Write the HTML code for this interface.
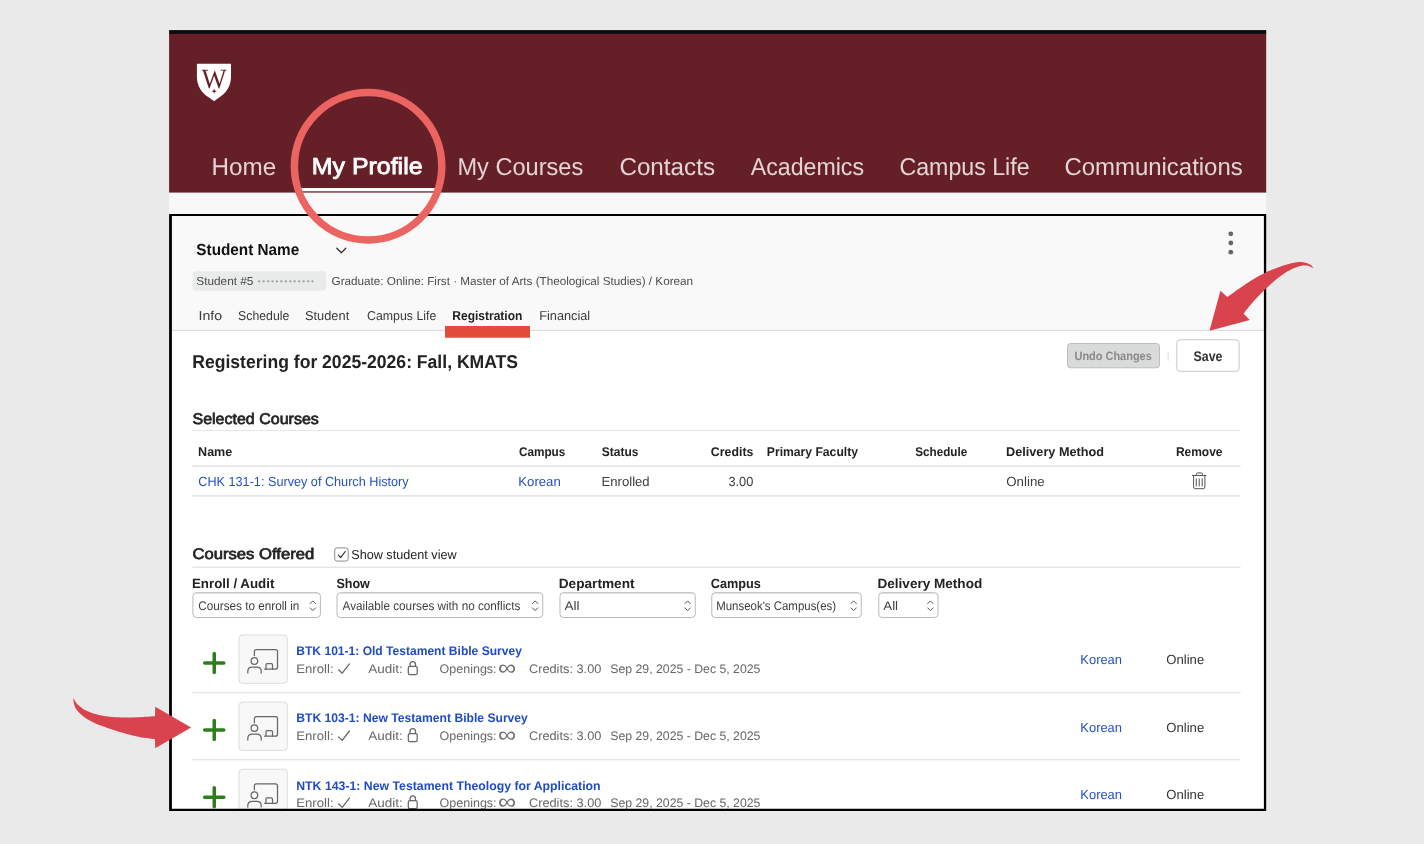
<!DOCTYPE html>
<html lang="en">
<head>
<meta charset="utf-8">
<title>Registration - My Profile</title>
<style>
html,body{margin:0;padding:0}
body{width:1424px;height:844px;position:relative;overflow:hidden;background:#eaeaea;font-family:"Liberation Sans",sans-serif;}
.t{position:absolute;left:0;top:0;white-space:nowrap;line-height:1;transform-origin:0 0;margin:0;padding:0;border:0;background:none;font-family:inherit;font-weight:400;letter-spacing:0;text-decoration:none;display:block;text-rendering:geometricPrecision;will-change:opacity}
#page{position:absolute;left:0;top:0;width:1424px;height:844px;overflow:hidden;will-change:opacity}
.b{position:absolute;box-sizing:border-box;margin:0;padding:0}
svg{position:absolute;left:0;top:0;overflow:visible}
</style>
</head>
<body>
<div id="page">
<svg class="shapes" width="1424" height="844" viewBox="0 0 1424 844" aria-hidden="true"><rect x="169.10" y="30.10" width="1097.10" height="4.10" fill="#0b0b0b"/><rect x="169.10" y="33.80" width="1097.10" height="158.95" fill="#651f27"/><rect x="169.10" y="192.75" width="1097.10" height="21.85" fill="#f8f8f8"/><rect x="169.10" y="214.10" width="1097.10" height="116.30" fill="#f9f9f9"/><rect x="169.10" y="330.40" width="1097.10" height="480.70" fill="#fff"/><rect x="169.10" y="329.90" width="1097.10" height="1.00" fill="#dadada"/><path d="M196.9 63.8 H231 V77 C231 86 226 93 220.5 96.5 C218 98.2 216 99.6 214.2 101.2 C212.2 99.6 210 98.2 207.8 96.8 C202 93 196.9 86 196.9 77 Z" fill="#fff"/><path d="M214.2 88.6 l0.7 1.9 l1.9 0.7 l-1.9 0.7 l-0.7 1.9 l-0.7 -1.9 l-1.9 -0.7 l1.9 -0.7 Z" fill="#651f27"/><rect x="301.00" y="188.00" width="134.00" height="3.30" fill="#fff"/><path d="M336.8 248.3 L341.3 252.8 L345.8 248.3" fill="none" stroke="#333" stroke-width="1.3" stroke-linecap="round" stroke-linejoin="round"/><circle cx="1230.8" cy="233.8" r="2.4" fill="#666"/><circle cx="1230.8" cy="243.0" r="2.4" fill="#666"/><circle cx="1230.8" cy="252.2" r="2.4" fill="#666"/><rect x="192.60" y="271.30" width="133.60" height="19.10" rx="3.00" fill="#e9eaea"/><rect x="445.00" y="326.00" width="85.00" height="11.70" fill="#e24c3b"/><rect x="1067.50" y="343.50" width="92.00" height="24.30" rx="3.00" fill="#d9dada" stroke="#bdbdbd" stroke-width="1"/><rect x="1167.60" y="351.50" width="1.00" height="9.50" fill="#dedede"/><rect x="1176.80" y="339.80" width="62.30" height="31.50" rx="3.00" fill="#fff" stroke="#c8c8c8" stroke-width="1"/><rect x="192.50" y="430.00" width="1048.10" height="1.00" fill="#e6e6e6"/><rect x="192.50" y="465.20" width="1048.10" height="1.80" fill="#e6e6e6"/><rect x="192.50" y="495.00" width="1048.10" height="1.80" fill="#e6e6e6"/><rect x="192.50" y="566.50" width="1048.10" height="1.50" fill="#e6e6e6"/><g fill="none" stroke="#555" stroke-width="1" stroke-linecap="round" stroke-linejoin="round"><path d="M1192.3 475.5 H1206"/><path d="M1196.4 475.3 V474.2 Q1196.4 472.9 1197.7 472.9 H1201.2 Q1202.5 472.9 1202.5 474.2 V475.3"/><path d="M1193.6 475.8 V487 Q1193.6 488.7 1195.3 488.7 H1203.2 Q1204.9 488.7 1204.9 487 V475.8"/><path d="M1196.3 478.8 V486 M1199.25 478.8 V486 M1202.2 478.8 V486"/></g><rect x="334.70" y="547.90" width="13.50" height="13.20" rx="2.50" fill="#fff" stroke="#8c8c8c" stroke-width="1"/><path d="M338.3 555 L340.6 557.7 L345.2 551.5" fill="none" stroke="#222" stroke-width="1.1" stroke-linecap="round" stroke-linejoin="round"/><rect x="192.90" y="592.70" width="127.50" height="24.80" rx="3.50" fill="#fff" stroke="#b9b9b9" stroke-width="1"/><path d="M195.40 593.6 H317.90" stroke="#000" stroke-opacity="0.07" stroke-width="1"/><path d="M310.10 603.6 L312.80 600.9 L315.50 603.6 M310.10 607.9 L312.80 610.6 L315.50 607.9" fill="none" stroke="#555" stroke-width="1" stroke-linecap="round" stroke-linejoin="round"/><rect x="337.00" y="592.70" width="205.75" height="24.80" rx="3.50" fill="#fff" stroke="#b9b9b9" stroke-width="1"/><path d="M339.50 593.6 H540.25" stroke="#000" stroke-opacity="0.07" stroke-width="1"/><path d="M532.45 603.6 L535.15 600.9 L537.85 603.6 M532.45 607.9 L535.15 610.6 L537.85 607.9" fill="none" stroke="#555" stroke-width="1" stroke-linecap="round" stroke-linejoin="round"/><rect x="560.00" y="592.70" width="135.25" height="24.80" rx="3.50" fill="#fff" stroke="#b9b9b9" stroke-width="1"/><path d="M562.50 593.6 H692.75" stroke="#000" stroke-opacity="0.07" stroke-width="1"/><path d="M684.95 603.6 L687.65 600.9 L690.35 603.6 M684.95 607.9 L687.65 610.6 L690.35 607.9" fill="none" stroke="#555" stroke-width="1" stroke-linecap="round" stroke-linejoin="round"/><rect x="711.75" y="592.70" width="149.50" height="24.80" rx="3.50" fill="#fff" stroke="#b9b9b9" stroke-width="1"/><path d="M714.25 593.6 H858.75" stroke="#000" stroke-opacity="0.07" stroke-width="1"/><path d="M850.95 603.6 L853.65 600.9 L856.35 603.6 M850.95 607.9 L853.65 610.6 L856.35 607.9" fill="none" stroke="#555" stroke-width="1" stroke-linecap="round" stroke-linejoin="round"/><rect x="878.75" y="592.70" width="59.25" height="24.80" rx="3.50" fill="#fff" stroke="#b9b9b9" stroke-width="1"/><path d="M881.25 593.6 H935.50" stroke="#000" stroke-opacity="0.07" stroke-width="1"/><path d="M927.70 603.6 L930.40 600.9 L933.10 603.6 M927.70 607.9 L930.40 610.6 L933.10 607.9" fill="none" stroke="#555" stroke-width="1" stroke-linecap="round" stroke-linejoin="round"/><clipPath id="pc"><rect x="169.1" y="214.1" width="1097.1" height="597.0"/></clipPath><g clip-path="url(#pc)"><g transform="translate(0 0.00)" fill="none" stroke-linecap="round" stroke-linejoin="round"><rect x="239.00" y="635.00" width="48.30" height="48.30" rx="3.50" fill="#f8f8f8" stroke="#dddddd" stroke-width="1"/><path d="M204.7 663 H223.8 M214.25 653.5 V672.5" stroke="#2f7d1d" stroke-width="3.5"/><g stroke="#666" stroke-width="1.25"><path d="M254.4 655.6 V651.6 Q254.4 649.6 256.4 649.6 H275.5 Q277.5 649.6 277.5 651.6 V667.1 Q277.5 669.1 275.5 669.1 H264.6"/><path d="M266 669 V664.8 Q266 663.6 267.2 663.6 H271.3 Q272.5 663.6 272.5 664.8 V669"/><circle cx="254.4" cy="661" r="3.3"/><path d="M247.8 672.9 V671.5 Q247.8 667.1 252.2 667.1 H256.8 Q261.2 667.1 261.2 671.5 V672.9"/><path d="M338.6 669.8 L342.2 673.2 L349.4 663.9"/><rect x="408.3" y="666.4" width="8.9" height="8.1" rx="1.6"/><path d="M410 666.4 V664.6 Q410 661.6 412.75 661.6 Q415.5 661.6 415.5 664.6 V666.4"/></g><rect x="192.50" y="691.80" width="1048.10" height="1.50" fill="#e6e6e6"/></g><g transform="translate(0 67.10)" fill="none" stroke-linecap="round" stroke-linejoin="round"><rect x="239.00" y="635.00" width="48.30" height="48.30" rx="3.50" fill="#f8f8f8" stroke="#dddddd" stroke-width="1"/><path d="M204.7 663 H223.8 M214.25 653.5 V672.5" stroke="#2f7d1d" stroke-width="3.5"/><g stroke="#666" stroke-width="1.25"><path d="M254.4 655.6 V651.6 Q254.4 649.6 256.4 649.6 H275.5 Q277.5 649.6 277.5 651.6 V667.1 Q277.5 669.1 275.5 669.1 H264.6"/><path d="M266 669 V664.8 Q266 663.6 267.2 663.6 H271.3 Q272.5 663.6 272.5 664.8 V669"/><circle cx="254.4" cy="661" r="3.3"/><path d="M247.8 672.9 V671.5 Q247.8 667.1 252.2 667.1 H256.8 Q261.2 667.1 261.2 671.5 V672.9"/><path d="M338.6 669.8 L342.2 673.2 L349.4 663.9"/><rect x="408.3" y="666.4" width="8.9" height="8.1" rx="1.6"/><path d="M410 666.4 V664.6 Q410 661.6 412.75 661.6 Q415.5 661.6 415.5 664.6 V666.4"/></g><rect x="192.50" y="691.80" width="1048.10" height="1.50" fill="#e6e6e6"/></g><g transform="translate(0 134.20)" fill="none" stroke-linecap="round" stroke-linejoin="round"><rect x="239.00" y="635.00" width="48.30" height="48.30" rx="3.50" fill="#f8f8f8" stroke="#dddddd" stroke-width="1"/><path d="M204.7 663 H223.8 M214.25 653.5 V672.5" stroke="#2f7d1d" stroke-width="3.5"/><g stroke="#666" stroke-width="1.25"><path d="M254.4 655.6 V651.6 Q254.4 649.6 256.4 649.6 H275.5 Q277.5 649.6 277.5 651.6 V667.1 Q277.5 669.1 275.5 669.1 H264.6"/><path d="M266 669 V664.8 Q266 663.6 267.2 663.6 H271.3 Q272.5 663.6 272.5 664.8 V669"/><circle cx="254.4" cy="661" r="3.3"/><path d="M247.8 672.9 V671.5 Q247.8 667.1 252.2 667.1 H256.8 Q261.2 667.1 261.2 671.5 V672.9"/><path d="M338.6 669.8 L342.2 673.2 L349.4 663.9"/><rect x="408.3" y="666.4" width="8.9" height="8.1" rx="1.6"/><path d="M410 666.4 V664.6 Q410 661.6 412.75 661.6 Q415.5 661.6 415.5 664.6 V666.4"/></g></g></g></svg>
<header>
<span class="t" style="font-size:27.9px;font-family:'Liberation Serif',serif;transform:translate(201.56px,66px) scaleX(0.9543);color:#651f27">W</span>
<nav>
<a class="t" style="font-size:24.4px;transform:translate(211.59px,156px) scaleX(0.9943);color:#e3d4d6">Home</a>
<a class="t" style="font-size:23.2px;-webkit-text-stroke:0.035em currentColor;transform:translate(311.78px,155px) scaleX(1.0743);color:#fff">My Profile</a>
<a class="t" style="font-size:24.4px;transform:translate(457.46px,156px) scaleX(0.9664);color:#e3d4d6">My Courses</a>
<a class="t" style="font-size:24.4px;transform:translate(619.41px,156px) scaleX(0.9930);color:#e3d4d6">Contacts</a>
<a class="t" style="font-size:24.4px;transform:translate(750.77px,156px) scaleX(0.9488);color:#e3d4d6">Academics</a>
<a class="t" style="font-size:24.4px;transform:translate(899.48px,156px) scaleX(0.9503);color:#e3d4d6">Campus Life</a>
<a class="t" style="font-size:24.4px;transform:translate(1064.43px,156px) scaleX(0.9815);color:#e3d4d6">Communications</a>
</nav>
</header>
<main>
<section>
<h1 class="t" style="font-size:16.1px;font-weight:700;transform:translate(196.32px,242px) scaleX(0.9512);color:#111">Student Name</h1>
<span class="t" style="font-size:11.6px;transform:translate(196.26px,276px) scaleX(1.0197);color:#4c4c4c">Student #5</span>
<span class="t" style="font-size:8.0px;letter-spacing:1.64px;transform:translate(257.79px,278px) scaleX(1.0000);color:#9c9c9c">•••••••••••••</span>
<span class="t" style="font-size:11.6px;transform:translate(331.54px,276px) scaleX(1.0091);color:#4c4c4c">Graduate: Online: First · Master of Arts (Theological Studies) / Korean</span>
<nav>
<a class="t" style="font-size:12.9px;transform:translate(198.48px,310px) scaleX(1.0956);color:#3a3a3a">Info</a>
<a class="t" style="font-size:12.9px;transform:translate(238.02px,310px) scaleX(0.9554);color:#3a3a3a">Schedule</a>
<a class="t" style="font-size:12.9px;transform:translate(304.98px,310px) scaleX(0.9951);color:#3a3a3a">Student</a>
<a class="t" style="font-size:12.9px;transform:translate(367.01px,310px) scaleX(0.9584);color:#3a3a3a">Campus Life</a>
<a class="t" style="font-size:12.9px;font-weight:700;transform:translate(452.37px,310px) scaleX(0.9306);color:#222">Registration</a>
<a class="t" style="font-size:12.9px;transform:translate(539.16px,310px) scaleX(0.9895);color:#3a3a3a">Financial</a>
</nav>
</section>
<section>
<h2 class="t" style="font-size:18.5px;font-weight:700;transform:translate(192.25px,353px) scaleX(0.9498);color:#222">Registering for 2025-2026: Fall, KMATS</h2>
<button class="t" style="font-size:12.1px;font-weight:700;transform:translate(1074.50px,350px) scaleX(0.9056);color:#8a8a8a">Undo Changes</button>
<button class="t" style="font-size:14.0px;font-weight:700;transform:translate(1193.51px,349px) scaleX(0.8870);color:#333">Save</button>
</section>
<section>
<h3 class="t" style="font-size:15.5px;-webkit-text-stroke:0.046em currentColor;transform:translate(192.47px,412px) scaleX(1.0327);color:#222">Selected Courses</h3>
<span class="t" style="font-size:12.6px;font-weight:700;transform:translate(198.08px,446px) scaleX(0.9962);color:#222">Name</span>
<span class="t" style="font-size:12.6px;font-weight:700;transform:translate(518.89px,446px) scaleX(0.9341);color:#222">Campus</span>
<span class="t" style="font-size:12.6px;font-weight:700;transform:translate(601.79px,446px) scaleX(0.9504);color:#222">Status</span>
<span class="t" style="font-size:12.6px;font-weight:700;transform:translate(710.87px,446px) scaleX(0.9797);color:#222">Credits</span>
<span class="t" style="font-size:12.6px;font-weight:700;transform:translate(766.83px,446px) scaleX(0.9645);color:#222">Primary Faculty</span>
<span class="t" style="font-size:12.6px;font-weight:700;transform:translate(915.29px,446px) scaleX(0.9283);color:#222">Schedule</span>
<span class="t" style="font-size:12.6px;font-weight:700;transform:translate(1006.04px,446px) scaleX(1.0065);color:#222">Delivery Method</span>
<span class="t" style="font-size:12.6px;font-weight:700;transform:translate(1175.88px,446px) scaleX(0.9523);color:#222">Remove</span>
<a class="t" style="font-size:13.2px;transform:translate(198.27px,475px) scaleX(0.9600);color:#2450c4">CHK 131-1: Survey of Church History</a>
<a class="t" style="font-size:13.2px;transform:translate(518.34px,475px) scaleX(0.9958);color:#2450c4">Korean</a>
<span class="t" style="font-size:13.2px;transform:translate(601.60px,475px) scaleX(0.9932);color:#3d3d3d">Enrolled</span>
<span class="t" style="font-size:13.2px;transform:translate(728.39px,475px) scaleX(0.9721);color:#3d3d3d">3.00</span>
<span class="t" style="font-size:13.2px;transform:translate(1006.27px,475px) scaleX(1.0068);color:#3d3d3d">Online</span>
</section>
<section>
<h3 class="t" style="font-size:15.3px;-webkit-text-stroke:0.046em currentColor;transform:translate(192.40px,547px) scaleX(1.0889);color:#222">Courses Offered</h3>
<label class="t" style="font-size:13.0px;transform:translate(351.21px,548px) scaleX(0.9727);color:#222">Show student view</label>
<label class="t" style="font-size:13.4px;font-weight:700;transform:translate(191.99px,577px) scaleX(0.9947);color:#222">Enroll / Audit</label>
<label class="t" style="font-size:13.4px;font-weight:700;transform:translate(336.38px,577px) scaleX(0.9374);color:#222">Show</label>
<label class="t" style="font-size:13.4px;font-weight:700;transform:translate(558.74px,577px) scaleX(1.0187);color:#222">Department</label>
<label class="t" style="font-size:13.4px;font-weight:700;transform:translate(710.86px,577px) scaleX(0.9467);color:#222">Campus</label>
<label class="t" style="font-size:13.4px;font-weight:700;transform:translate(877.48px,577px) scaleX(1.0124);color:#222">Delivery Method</label>
<span class="t" style="font-size:12.5px;transform:translate(198.30px,600px) scaleX(0.9382);color:#3d3d3d">Courses to enroll in</span>
<span class="t" style="font-size:12.5px;transform:translate(342.62px,600px) scaleX(0.9378);color:#3d3d3d">Available courses with no conflicts</span>
<span class="t" style="font-size:12.5px;transform:translate(564.54px,600px) scaleX(1.0770);color:#3d3d3d">All</span>
<span class="t" style="font-size:12.5px;transform:translate(716.21px,600px) scaleX(0.9156);color:#3d3d3d">Munseok&#x27;s Campus(es)</span>
<span class="t" style="font-size:12.5px;transform:translate(883.25px,600px) scaleX(1.0653);color:#3d3d3d">All</span>
<article>
<a class="t" style="font-size:12.5px;font-weight:700;transform:translate(296.30px,645px) scaleX(0.9645);color:#1f4cc6">BTK 101-1: Old Testament Bible Survey</a>
<span class="t" style="font-size:12.4px;transform:translate(296.22px,663px) scaleX(1.0633);color:#666">Enroll:</span>
<span class="t" style="font-size:12.4px;transform:translate(368.19px,663px) scaleX(1.0875);color:#666">Audit:</span>
<span class="t" style="font-size:12.4px;transform:translate(439.54px,663px) scaleX(1.0097);color:#666">Openings:</span>
<span class="t" style="font-size:19.0px;transform:translate(497.99px,658px) scale(1.3382,1.160);color:#707070">∞</span>
<span class="t" style="font-size:12.4px;transform:translate(528.94px,663px) scaleX(1.0305);color:#666">Credits: 3.00</span>
<span class="t" style="font-size:12.4px;transform:translate(610.25px,663px) scaleX(0.9907);color:#666">Sep 29, 2025 - Dec 5, 2025</span>
<a class="t" style="font-size:13.2px;transform:translate(1080.37px,653px) scaleX(0.9780);color:#2450c4">Korean</a>
<span class="t" style="font-size:13.2px;transform:translate(1166.32px,653px) scaleX(0.9933);color:#333">Online</span>
</article>
<article>
<a class="t" style="font-size:12.5px;font-weight:700;transform:translate(296.28px,712px) scaleX(0.9700);color:#1f4cc6">BTK 103-1: New Testament Bible Survey</a>
<span class="t" style="font-size:12.4px;transform:translate(296.22px,730px) scaleX(1.0633);color:#666">Enroll:</span>
<span class="t" style="font-size:12.4px;transform:translate(368.19px,730px) scaleX(1.0875);color:#666">Audit:</span>
<span class="t" style="font-size:12.4px;transform:translate(439.54px,730px) scaleX(1.0097);color:#666">Openings:</span>
<span class="t" style="font-size:19.0px;transform:translate(497.99px,725px) scale(1.3382,1.160);color:#707070">∞</span>
<span class="t" style="font-size:12.4px;transform:translate(528.94px,730px) scaleX(1.0305);color:#666">Credits: 3.00</span>
<span class="t" style="font-size:12.4px;transform:translate(610.25px,730px) scaleX(0.9907);color:#666">Sep 29, 2025 - Dec 5, 2025</span>
<a class="t" style="font-size:13.2px;transform:translate(1080.37px,721px) scaleX(0.9780);color:#2450c4">Korean</a>
<span class="t" style="font-size:13.2px;transform:translate(1166.32px,721px) scaleX(0.9933);color:#333">Online</span>
</article>
<article>
<a class="t" style="font-size:12.5px;font-weight:700;transform:translate(296.23px,780px) scaleX(0.9826);color:#1f4cc6">NTK 143-1: New Testament Theology for Application</a>
<span class="t" style="font-size:12.4px;transform:translate(296.22px,797px) scaleX(1.0633);color:#666">Enroll:</span>
<span class="t" style="font-size:12.4px;transform:translate(368.19px,797px) scaleX(1.0875);color:#666">Audit:</span>
<span class="t" style="font-size:12.4px;transform:translate(439.54px,797px) scaleX(1.0097);color:#666">Openings:</span>
<span class="t" style="font-size:19.0px;transform:translate(497.99px,792px) scale(1.3382,1.160);color:#707070">∞</span>
<span class="t" style="font-size:12.4px;transform:translate(528.94px,797px) scaleX(1.0305);color:#666">Credits: 3.00</span>
<span class="t" style="font-size:12.4px;transform:translate(610.25px,797px) scaleX(0.9907);color:#666">Sep 29, 2025 - Dec 5, 2025</span>
<a class="t" style="font-size:13.2px;transform:translate(1080.37px,788px) scaleX(0.9780);color:#2450c4">Korean</a>
<span class="t" style="font-size:13.2px;transform:translate(1166.32px,788px) scaleX(0.9933);color:#333">Online</span>
</article>
</section>
</main>
<svg class="overlay" width="1424" height="844" viewBox="0 0 1424 844" aria-hidden="true"><path fill="#000" fill-rule="evenodd" d="M169.10 214.10 H1266.20 V811.10 H169.10 Z M171.90 215.90 H1263.90 V808.70 H171.90 Z"/><circle cx="368.1" cy="166.3" r="73.7" fill="none" stroke="#ec6462" stroke-width="7.5"/><path fill="#d9434e" d="M1313.6 268.4 C1313.3 268.0 1312.7 266.9 1311.9 266.1 C1311.2 265.4 1310.2 264.5 1309.1 263.9 C1308.0 263.3 1306.8 263.0 1305.5 262.7 C1304.2 262.4 1302.8 262.2 1301.3 262.1 C1299.8 262.0 1298.4 262.1 1296.7 262.3 C1295.0 262.5 1293.1 262.8 1291.3 263.2 C1289.5 263.6 1287.8 264.1 1286.0 264.7 C1284.2 265.2 1282.5 265.9 1280.7 266.5 C1278.9 267.1 1277.1 267.9 1275.3 268.6 C1273.5 269.3 1271.6 270.0 1270.0 270.6 C1268.4 271.2 1267.6 271.5 1265.8 272.4 C1264.0 273.3 1261.4 274.6 1259.2 275.8 C1257.0 277.0 1254.7 278.4 1252.5 279.8 C1250.3 281.2 1248.1 282.5 1245.9 284.0 C1243.7 285.5 1241.5 287.1 1239.3 288.6 C1237.1 290.1 1234.6 291.8 1232.6 293.2 C1230.6 294.6 1228.3 296.3 1227.4 296.9 L1220.4 290.8 L1209.5 330.8 L1249.8 319.9 L1243.6 313.8 C1244.5 312.5 1247.1 308.9 1249.3 306.2 C1251.5 303.5 1254.4 300.4 1256.9 297.7 C1259.4 295.0 1262.0 292.6 1264.5 290.1 C1267.0 287.7 1269.5 285.2 1272.0 283.0 C1274.5 280.8 1277.1 278.7 1279.6 276.8 C1282.1 274.9 1284.7 273.1 1287.2 271.6 C1289.7 270.1 1292.6 268.8 1294.8 267.8 C1297.0 266.9 1298.6 266.3 1300.5 265.9 C1302.4 265.5 1304.6 265.5 1306.2 265.6 C1307.8 265.7 1308.8 266.1 1310.0 266.6 C1311.2 267.1 1313.0 268.1 1313.6 268.4 Z"/><path fill="#d9434e" d="M73.3 697.7 C73.5 698.1 74.1 699.4 74.6 700.3 C75.1 701.2 75.5 702.0 76.3 703.0 C77.1 704.0 78.2 705.0 79.4 706.0 C80.6 707.0 81.8 708.0 83.2 708.9 C84.6 709.8 86.1 710.6 87.7 711.3 C89.3 712.0 90.8 712.6 92.6 713.2 C94.4 713.8 96.1 714.2 98.3 714.7 C100.5 715.2 103.5 715.9 105.9 716.3 C108.4 716.7 110.5 716.9 113.0 717.1 C115.5 717.3 117.7 717.5 120.8 717.5 C123.9 717.5 127.9 717.5 131.7 717.4 C135.5 717.3 139.7 717.1 143.6 716.9 C147.5 716.7 153.1 716.3 155.0 716.2 L155.2 706.7 L191.1 727.4 L155.2 748.2 L155.0 739.3 C153.6 739.1 149.3 738.6 146.3 738.1 C143.3 737.6 140.2 737.0 137.2 736.4 C134.2 735.8 131.1 735.1 128.1 734.3 C125.0 733.5 122.0 732.7 118.9 731.8 C115.9 730.9 112.8 729.8 109.8 728.8 C106.8 727.8 103.2 726.6 100.7 725.6 C98.2 724.6 96.4 723.8 94.5 722.9 C92.6 722.0 90.8 721.1 89.2 720.2 C87.6 719.3 86.2 718.4 84.7 717.4 C83.2 716.4 81.8 715.2 80.5 714.0 C79.2 712.8 78.0 711.5 77.1 710.2 C76.1 708.9 75.4 707.7 74.8 706.4 C74.2 705.1 74.0 704.0 73.7 702.6 C73.5 701.2 73.4 698.5 73.3 697.7 Z"/></svg>
</div>
</body>
</html>
